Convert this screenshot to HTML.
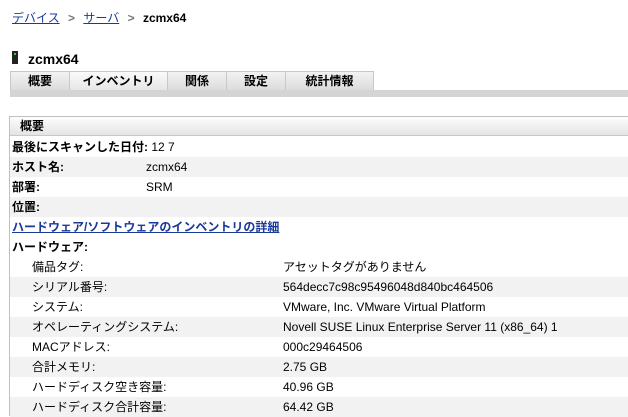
<!DOCTYPE html>
<html><head><meta charset="utf-8"><style>
body{margin:0;width:628px;height:415px;overflow:hidden;background:#fff;font-family:"Liberation Sans","Noto Sans CJK JP",sans-serif;font-size:12px;color:#000;position:relative}
.a{position:absolute;white-space:nowrap}
a{color:#1a3a9a;text-decoration:underline}
.tab{position:absolute;top:71px;height:18px;border:1px solid #c8c8c8;border-bottom:none;background:linear-gradient(#f2f2f2,#dcdcdc);font-weight:bold;text-align:center;line-height:19px;font-size:12px}
.row{position:absolute;left:10px;width:618px;height:20px;line-height:20px}
.g{background:#f2f2f2}
.row span{position:absolute;white-space:nowrap}
</style></head><body>
<div class="a" style="left:12px;top:10px;line-height:16px"><a>デバイス</a> <span style="color:#777;font-weight:bold;margin:0 5px">&gt;</span> <a>サーバ</a> <span style="color:#777;font-weight:bold;margin:0 5px">&gt;</span> <b>zcmx64</b></div>
<div class="a" style="left:12px;top:51px;width:6px;height:13px;background:#222"><div style="position:absolute;left:2px;top:2px;width:2px;height:2px;background:#3c3"></div></div>
<div class="a" style="left:28px;top:50px;font-size:14px;font-weight:bold;line-height:18px">zcmx64</div>
<div class="tab" style="left:10px;width:58px">概要</div>
<div class="tab" style="left:69px;width:97px;background:linear-gradient(#fafafa,#e6e6e6)">インベントリ</div>
<div class="tab" style="left:167px;width:58px">関係</div>
<div class="tab" style="left:226px;width:58px">設定</div>
<div class="tab" style="left:285px;width:87px">統計情報</div>
<div class="a" style="left:10px;top:90px;width:618px;height:7px;background:#d4d4d4"></div>
<div class="a" style="left:9px;top:116px;width:619px;height:299px;border-left:1px solid #c0c0c0;border-top:1px solid #c0c0c0"></div>
<div class="a" style="left:10px;top:117px;width:618px;height:18px;background:linear-gradient(#fdfdfd,#e4e4e4);border-bottom:1px solid #c8c8c8;font-weight:bold;line-height:19px"><span style="margin-left:10px">概要</span></div>
<div class="row" style="top:137px"><span style="left:2px"><b>最後にスキャンした日付:</b> 12 7</span></div>
<div class="row g" style="top:157px"><span style="left:2px;font-weight:bold">ホスト名:</span><span style="left:136px">zcmx64</span></div>
<div class="row" style="top:177px"><span style="left:2px;font-weight:bold">部署:</span><span style="left:136px">SRM</span></div>
<div class="row g" style="top:197px"><span style="left:2px;font-weight:bold">位置:</span></div>
<div class="row" style="top:217px"><span style="left:2px;font-weight:bold"><a>ハードウェア/ソフトウェアのインベントリの詳細</a></span></div>
<div class="row" style="top:237px"><span style="left:2px;font-weight:bold">ハードウェア:</span></div>
<div class="row" style="top:257px"><span style="left:22px">備品タグ:</span><span style="left:273px">アセットタグがありません</span></div>
<div class="row g" style="top:277px"><span style="left:22px">シリアル番号:</span><span style="left:273px">564decc7c98c95496048d840bc464506</span></div>
<div class="row" style="top:297px"><span style="left:22px">システム:</span><span style="left:273px">VMware, Inc. VMware Virtual Platform</span></div>
<div class="row g" style="top:317px"><span style="left:22px">オペレーティングシステム:</span><span style="left:273px">Novell SUSE Linux Enterprise Server 11 (x86_64) 1</span></div>
<div class="row" style="top:337px"><span style="left:22px">MACアドレス:</span><span style="left:273px">000c29464506</span></div>
<div class="row g" style="top:357px"><span style="left:22px">合計メモリ:</span><span style="left:273px">2.75 GB</span></div>
<div class="row" style="top:377px"><span style="left:22px">ハードディスク空き容量:</span><span style="left:273px">40.96 GB</span></div>
<div class="row g" style="top:397px"><span style="left:22px">ハードディスク合計容量:</span><span style="left:273px">64.42 GB</span></div>
</body></html>
